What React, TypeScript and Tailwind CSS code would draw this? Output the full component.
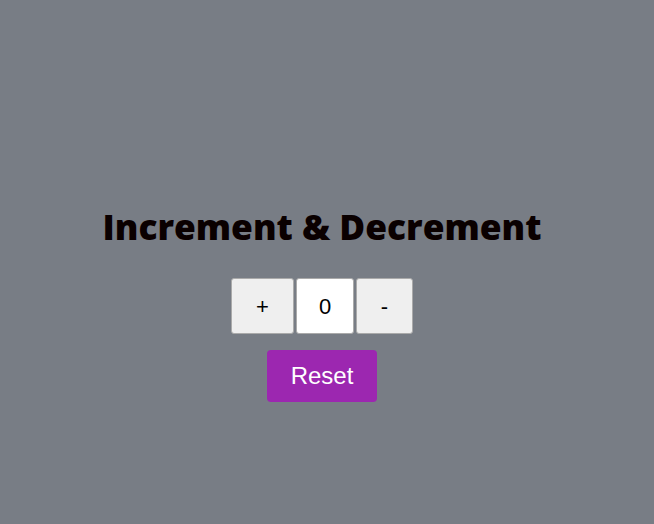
import { useState } from 'react';

export default function App() {
  const [count, setCount] = useState(0);

  return (
    <div className="min-h-screen w-full bg-[#787d85] flex flex-col items-center justify-center pt-[87px] pr-[10px] font-['Liberation_Sans',Arial,sans-serif]">
      <h1 className="text-[35.3px] font-extrabold text-[#0a0000] font-['Open_Sans',sans-serif] leading-none mb-[34px]">
        Increment &amp; Decrement
      </h1>
      <div className="flex items-center gap-[2px]">
        <button
          onClick={() => setCount(count + 1)}
          className="w-[63px] h-[56px] bg-[#efefef] rounded-[3px] border border-[#aaa] text-[22px] text-black"
        >
          +
        </button>
        <div className="w-[58px] h-[56px] bg-white rounded-[3px] border border-[#aaa] flex items-center justify-center text-[22px] text-black">
          {count}
        </div>
        <button
          onClick={() => setCount(count - 1)}
          className="w-[57px] h-[56px] bg-[#efefef] rounded-[3px] border border-[#aaa] text-[22px] text-black"
        >
          -
        </button>
      </div>
      <button
        onClick={() => setCount(0)}
        className="mt-[16px] w-[110px] h-[52px] bg-[#9c27b0] rounded-[4px] text-white text-[24px]"
      >
        Reset
      </button>
    </div>
  );
}
